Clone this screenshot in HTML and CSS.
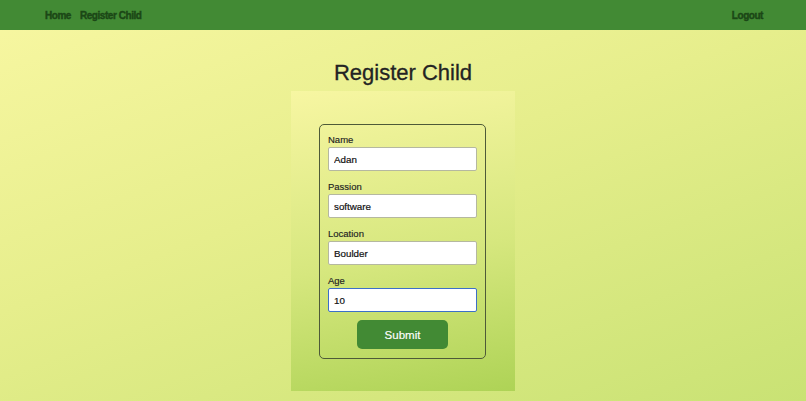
FILE: index.html
```html
<!DOCTYPE html>
<html>
<head>
<meta charset="utf-8">
<link rel="stylesheet" href="styles.css">
</head>
<body>
<nav class="navbar">
  <div class="nav-left">
    <a class="nav-link" href="#">Home</a>
    <a class="nav-link" href="#">Register Child</a>
  </div>
  <a class="nav-link" href="#">Logout</a>
</nav>
<main class="main">
  <h1 class="title">Register Child</h1>
  <section class="panel">
    <form class="form-box">
      <div class="field">
        <label class="label">Name</label>
        <input class="input" type="text" value="Adan">
      </div>
      <div class="field">
        <label class="label">Passion</label>
        <input class="input" type="text" value="software">
      </div>
      <div class="field">
        <label class="label">Location</label>
        <input class="input" type="text" value="Boulder">
      </div>
      <div class="field">
        <label class="label">Age</label>
        <input class="input input-focus" type="text" value="10">
      </div>
      <button class="submit" type="button">Submit</button>
    </form>
  </section>
</main>
</body>
</html>
```
FILE: styles.css
```css
* { box-sizing: border-box; }
html, body { margin: 0; height: 100%; }
body {
  font-family: "Liberation Sans", Arial, sans-serif;
  background: linear-gradient(160deg, #f8f7a2 0%, #e6ee8c 45%, #c9e274 100%);
  overflow: hidden;
}
.navbar {
  height: 30px;
  background: #428a34;
  display: flex;
  align-items: center;
  justify-content: space-between;
  padding: 0 43px 0 45px;
}
.nav-left { display: flex; gap: 9px; }
.nav-link {
  color: #1b4716;
  font-weight: 700;
  font-size: 10px;
  letter-spacing: -0.45px;
  -webkit-text-stroke: 0.4px #1b4716;
  text-decoration: none;
}
.main {
  display: flex;
  flex-direction: column;
  align-items: center;
}
.title {
  margin: 30px 0 5px;
  font-size: 22px;
  line-height: 26px;
  font-weight: normal;
  color: #232323;
  -webkit-text-stroke: 0.3px #232323;
}
.panel {
  width: 224px;
  height: 300px;
  padding: 33px 0 0 28px;
  display: flex;
  background: linear-gradient(170deg, #f7f6a2 0%, #d6e77e 55%, #aed356 100%);
  align-items: flex-start;
}
.form-box {
  width: 167px;
  border: 1px solid #4e5a38;
  border-radius: 5px;
  padding: 9px 8px 9px 8px;
  display: flex;
  flex-direction: column;
  gap: 10px;
}
.field { display: flex; flex-direction: column; }
.label {
  font-size: 9.5px;
  line-height: 12px;
  color: #222;
  -webkit-text-stroke: 0.15px #222;
  margin-bottom: 1px;
}
.input {
  height: 24px;
  width: 100%;
  border: 1px solid #b5b8a0;
  border-radius: 2px;
  background: #fff;
  font-family: inherit;
  font-size: 9.8px;
  color: #111;
  -webkit-text-stroke: 0.2px #111;
  padding: 0 5px;
  outline: none;
}
.input-focus {
  border: 1.5px solid #3c6fc8;
}
.submit {
  align-self: center;
  margin-top: -2px;
  width: 91px;
  height: 29px;
  border: none;
  border-radius: 5px;
  background: #428a34;
  color: #fff;
  font-family: inherit;
  font-size: 11.5px;
  -webkit-text-stroke: 0.15px #fff;
}
```
